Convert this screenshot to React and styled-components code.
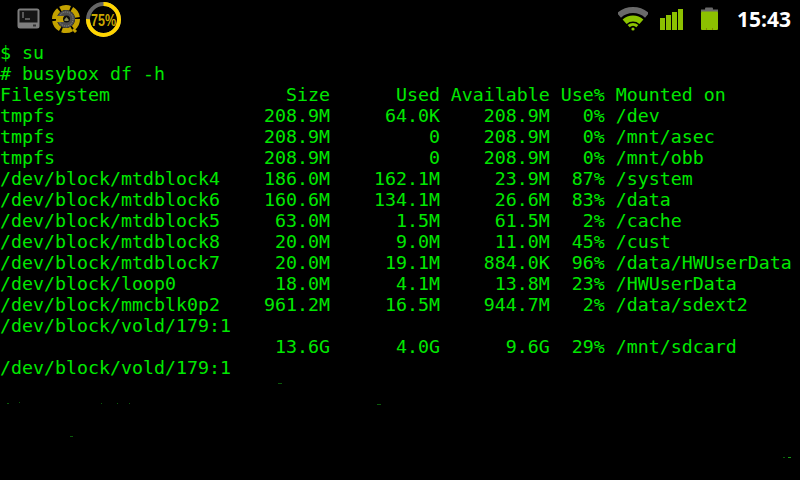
import React from 'react'
import styled, { createGlobalStyle } from 'styled-components'

const GlobalStyle = createGlobalStyle`
  html, body {
    margin: 0;
    background: #000;
  }
`

const Screen = styled.div`
  position: relative;
  width: 800px;
  height: 480px;
  overflow: hidden;
  background: #000;
`

const StatusBar = styled.div`
  display: flex;
  align-items: center;
  justify-content: space-between;
  height: 38px;
  padding: 0 9px 0 17px;
  box-sizing: border-box;
`

const IconGroup = styled.div`
  display: flex;
  align-items: center;
  gap: ${props => props.gap}px;
`

const Clock = styled.div`
  margin-left: 7px;
  color: #fff;
  font-family: "Open Sans", "Liberation Sans", sans-serif;
  font-weight: 700;
  font-size: 21px;
`

const Terminal = styled.pre`
  margin: 4px 0 0;
  color: #00e800;
  font-family: "DejaVu Sans Mono", monospace;
  font-size: 18.27px;
  line-height: 21px;
`

// leftover pixels of the terminal's redraw, below the last line
const Speck = styled.span`
  position: absolute;
  left: ${props => props.x}px;
  top: ${props => props.y}px;
  width: ${props => props.w}px;
  height: 1px;
  background: ${props => props.c || '#0a5c0a'};
`

const specks = [
  { x: 278, y: 383, w: 4 },
  { x: 7, y: 403, w: 2 },
  { x: 19, y: 402, w: 1 },
  { x: 101, y: 403, w: 1 },
  { x: 117, y: 403, w: 1 },
  { x: 129, y: 403, w: 1 },
  { x: 377, y: 404, w: 4 },
  { x: 70, y: 436, w: 3 },
  { x: 783, y: 457, w: 2 },
  { x: 788, y: 457, w: 3, c: '#14a014' },
]

const row = (fs, size, used, avail, pct, mount) =>
  fs.padEnd(20) + size.padStart(10) + used.padStart(10) + avail.padStart(10) + pct.padStart(5) + ' ' + mount

const output = [
  '$ su',
  '# busybox df -h',
  row('Filesystem', 'Size', 'Used', 'Available', 'Use%', 'Mounted on'),
  row('tmpfs', '208.9M', '64.0K', '208.9M', '0%', '/dev'),
  row('tmpfs', '208.9M', '0', '208.9M', '0%', '/mnt/asec'),
  row('tmpfs', '208.9M', '0', '208.9M', '0%', '/mnt/obb'),
  row('/dev/block/mtdblock4', '186.0M', '162.1M', '23.9M', '87%', '/system'),
  row('/dev/block/mtdblock6', '160.6M', '134.1M', '26.6M', '83%', '/data'),
  row('/dev/block/mtdblock5', '63.0M', '1.5M', '61.5M', '2%', '/cache'),
  row('/dev/block/mtdblock8', '20.0M', '9.0M', '11.0M', '45%', '/cust'),
  row('/dev/block/mtdblock7', '20.0M', '19.1M', '884.0K', '96%', '/data/HWUserData'),
  row('/dev/block/loop0', '18.0M', '4.1M', '13.8M', '23%', '/HWUserData'),
  row('/dev/block/mmcblk0p2', '961.2M', '16.5M', '944.7M', '2%', '/data/sdext2'),
  '/dev/block/vold/179:1',
  row('', '13.6G', '4.0G', '9.6G', '29%', '/mnt/sdcard'),
  '/dev/block/vold/179:1',
].join('\n')

const TerminalIcon = () => (
  <svg width="29" height="22" viewBox="0 0 29 22">
    <rect x="0.5" y="0.5" width="22" height="20" rx="2.5" fill="#7e7e7e" />
    <rect x="2.5" y="2.5" width="18" height="12" fill="#161616" />
    <path d="M5 5h2M5 7h2M5 9h2M8 11h5" stroke="#9a9a9a" strokeWidth="1" />
    <rect x="16" y="16.5" width="3" height="2" fill="#333" />
  </svg>
)

const GearIcon = () => (
  <svg width="30" height="30" viewBox="0 0 30 30">
    <circle cx="15" cy="15" r="11.5" fill="none" stroke="#c4a200" strokeWidth="5" strokeDasharray="10 2" />
    <circle cx="15" cy="15" r="9" fill="#4c4c4c" />
    <circle cx="15" cy="15" r="7" fill="none" stroke="#8c8c8c" strokeWidth="1" strokeDasharray="1 1" />
    <path d="M5 12h8v6H5z" fill="#c4a200" />
    <circle cx="15.5" cy="15" r="3.5" fill="#0c0c0c" />
    <path d="M13.5 15.5l2-2.5 2 2.5v1.5h-4z" fill="#8a8a5a" />
    <path d="M22 25l3 3" stroke="#c4a200" strokeWidth="3" />
  </svg>
)

const UsageRing = () => (
  <svg width="36" height="36" viewBox="0 0 36 36">
    <circle cx="17.5" cy="18.5" r="15.5" fill="none" stroke="#666" strokeWidth="4" />
    <circle
      cx="17.5"
      cy="18.5"
      r="15.5"
      fill="none"
      stroke="#ffd500"
      strokeWidth="4"
      strokeDasharray="73 97.4"
      transform="rotate(-90 17.5 18.5)"
    />
    <text
      x="17.5"
      y="24.5"
      textAnchor="middle"
      fontFamily="Liberation Sans, sans-serif"
      fontWeight="700"
      fontSize="16"
      fill="#c9a800"
      textLength="25"
      lengthAdjust="spacingAndGlyphs"
    >
      75%
    </text>
  </svg>
)

const WifiIcon = () => (
  <svg width="30" height="24" viewBox="0 0 30 24" fill="none">
    <path d="M0.95 8.4A21 21 0 0 1 29.05 8.4" stroke="#6a6a6a" strokeWidth="6" />
    <path d="M6.6 14.7A12.5 12.5 0 0 1 23.4 14.7" stroke="#8cc400" strokeWidth="6" />
    <path d="M10.65 19.17A6.5 6.5 0 0 1 19.35 19.17" stroke="#8cc400" strokeWidth="3" />
    <circle cx="15" cy="22" r="1.6" fill="#8cc400" />
  </svg>
)

const SignalBar = styled.div`
  width: 5px;
  height: ${props => props.h}px;
  background: #8cc000;
`

const SignalBars = styled.div`
  display: flex;
  align-items: flex-end;
  gap: 1px;
  height: 22px;
`

const BatteryIcon = () => (
  <svg width="23" height="24" viewBox="0 0 23 24">
    <rect x="10" y="0.5" width="8" height="3" rx="1" fill="#6a6a6a" />
    <rect x="6" y="2.5" width="17" height="3" fill="#6a6a6a" />
    <rect x="6" y="4.5" width="17" height="18.5" rx="1" fill="#8cc000" />
    <path d="M11 22h1M17 22h1" stroke="#7a4a00" strokeWidth="1" />
  </svg>
)

export default function App() {
  return (
    <Screen>
      <GlobalStyle />
      <StatusBar>
        <IconGroup gap={5}>
          <TerminalIcon />
          <GearIcon />
          <UsageRing />
        </IconGroup>
        <IconGroup gap={12}>
          <WifiIcon />
          <SignalBars>
            <SignalBar h={12} />
            <SignalBar h={15} />
            <SignalBar h={18} />
            <SignalBar h={21} />
          </SignalBars>
          <BatteryIcon />
          <Clock>15:43</Clock>
        </IconGroup>
      </StatusBar>
      <Terminal>{output}</Terminal>
      {specks.map(s => (
        <Speck key={s.x} x={s.x} y={s.y} w={s.w} c={s.c} />
      ))}
    </Screen>
  )
}
